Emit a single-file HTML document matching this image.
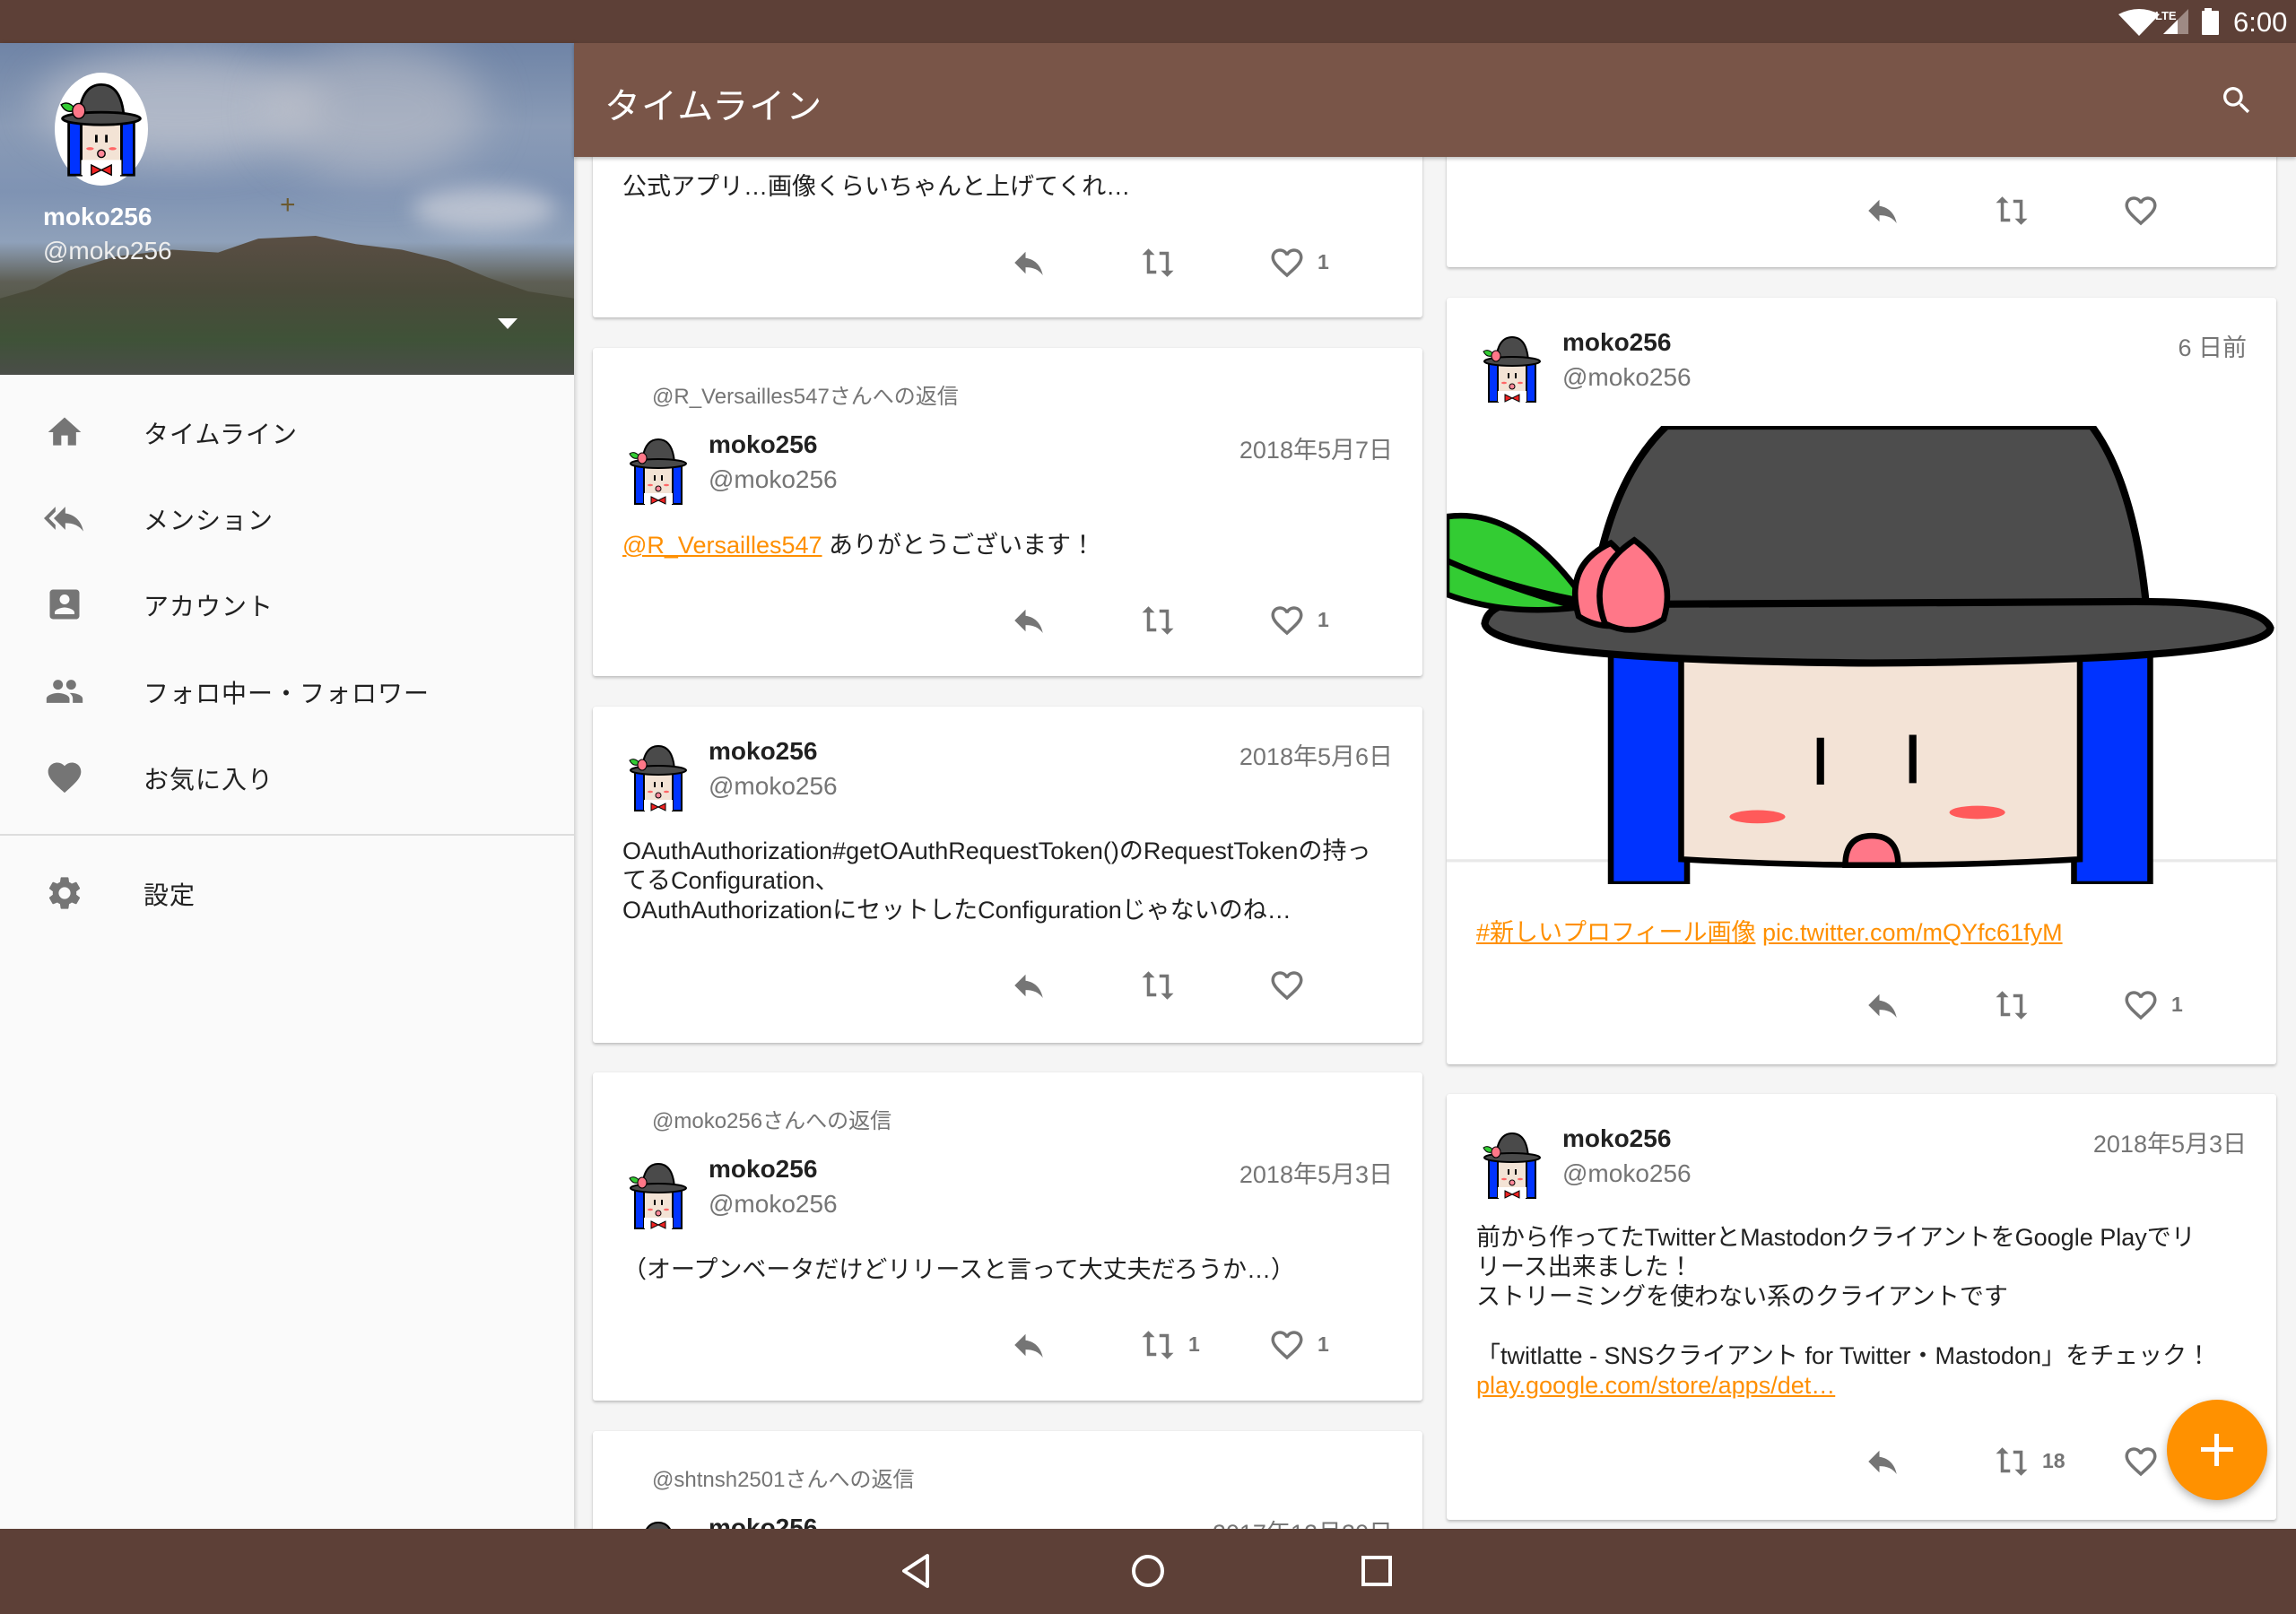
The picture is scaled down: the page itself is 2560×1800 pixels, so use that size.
<!DOCTYPE html>
<html><head><meta charset="utf-8"><style>
*{margin:0;padding:0;box-sizing:border-box}
body{width:2560px;height:1800px;overflow:hidden;background:#f5f5f5;font-family:"Liberation Sans","Noto Sans CJK JP",sans-serif;position:relative;color:#212121}
.abs{position:absolute}
.card{position:absolute;background:#fff;border-radius:3px;box-shadow:0 2px 3px rgba(0,0,0,.22),0 0 1px rgba(0,0,0,.12);overflow:hidden}
.t{position:absolute;white-space:nowrap}
.name{font-size:28px;font-weight:bold;color:#212121}
.handle{font-size:28px;color:#757575}
.date{font-size:27px;color:#757575}
.body{font-size:27px;color:#212121;line-height:33px}
.rep{font-size:24px;color:#757575}
.link{color:#ff8f00;text-decoration:underline}
.ic{position:absolute;width:42px;height:42px;fill:#757575}
.cnt{position:absolute;font-size:23px;color:#757575;font-weight:bold}
.menu{position:absolute;left:160px;font-size:28px;color:#212121;letter-spacing:1px;white-space:nowrap}
.mic{position:absolute;left:50px;width:44px;height:44px;fill:#757575}
</style></head><body>
<svg width="0" height="0" style="position:absolute">
<defs>
<symbol id="av" viewBox="0 0 80 80">
<rect x="14" y="34" width="10" height="44" fill="#0033ff" stroke="#000" stroke-width="2"/>
<rect x="56" y="34" width="10" height="44" fill="#0033ff" stroke="#000" stroke-width="2"/>
<rect x="24" y="34" width="32" height="34" fill="#f3e3d5" stroke="#000" stroke-width="2"/>
<path d="M22 32 Q24 6 40 6 Q56 6 58 32Z" fill="#4a4a4a" stroke="#000" stroke-width="2"/>
<ellipse cx="40" cy="33" rx="31" ry="5" fill="#4a4a4a" stroke="#000" stroke-width="2"/>
<path d="M8 22 Q14 18 20 26 Q12 30 8 22Z" fill="#3c3" stroke="#000" stroke-width="1"/>
<ellipse cx="22" cy="27" rx="5" ry="6" fill="#f78" stroke="#000" stroke-width="1"/>
<line x1="36" y1="46" x2="36" y2="52" stroke="#000" stroke-width="2"/><line x1="44" y1="46" x2="44" y2="52" stroke="#000" stroke-width="2"/>
<ellipse cx="31" cy="57" rx="3" ry="1.2" fill="#f66"/><ellipse cx="49" cy="57" rx="3" ry="1.2" fill="#f66"/>
<rect x="24" y="66" width="32" height="12" fill="#fff"/>
<path d="M32 70 L40 74 L48 70 L48 78 L40 74 L32 78Z" fill="#e22" stroke="#000" stroke-width="1"/>
<circle cx="40" cy="61" r="3" fill="#f89" stroke="#000" stroke-width="1"/>
</symbol>
<symbol id="reply" viewBox="0 0 24 24"><path d="M10 9V5l-7 7 7 7v-4.1c5 0 8.5 1.6 11 5.1-1-5-4-10-11-11z"/></symbol>
<symbol id="rt" viewBox="0 0 24 24"><path d="M7 7h10v3l4-4-4-4v3H5v6h2V7zm10 10H7v-3l-4 4 4 4v-3h12v-6h-2v4z" transform="rotate(90 12 12)"/></symbol>
<symbol id="fav" viewBox="0 0 24 24"><path d="M16.5 3c-1.74 0-3.41.81-4.5 2.09C10.91 3.81 9.24 3 7.5 3 4.420 3 2 5.42 2 8.5c0 3.78 3.4 6.86 8.55 11.54L12 21.35l1.45-1.32C18.6 15.36 22 12.280 22 8.5 22 5.42 19.58 3 16.5 3zm-4.4 15.55l-.1.1-.1-.1C7.14 14.24 4 11.39 4 8.5 4 6.5 5.5 5 7.5 5c1.54 0 3.04.99 3.57 2.36h1.87C13.46 5.99 14.96 5 16.5 5c2 0 3.5 1.5 3.5 3.5 0 2.89-3.14 5.74-7.9 10.05z"/></symbol>
</defs></svg>

<div class="abs" style="left:0;top:0;width:2560px;height:48px;background:#5d4037"></div>
<svg class="abs" style="left:2360px;top:10px" width="50" height="30" viewBox="0 0 50 30"><path d="M2 6 Q25 -6 48 6 L25 30Z" fill="#fff"/></svg>
<div class="t" style="left:2403px;top:10px;font-size:13px;color:#fff;font-weight:bold">LTE</div>
<svg class="abs" style="left:2410px;top:10px" width="32" height="30"><path d="M2 28 L30 0 L30 28Z" fill="#9e8a84"/><path d="M2 28 L18 12 L18 28Z" fill="#fff"/></svg>
<svg class="abs" style="left:2455px;top:9px" width="22" height="30"><rect x="3" y="0" width="8" height="4" fill="#fff"/><rect x="0" y="3" width="19" height="27" fill="#fff" rx="1"/></svg>
<div class="t" style="left:2490px;top:7px;font-size:31px;color:#fff">6:00</div>

<div class="abs" style="left:640px;top:48px;width:1920px;height:127px;background:#795548;box-shadow:0 2px 4px rgba(0,0,0,.25);z-index:2"></div>
<div class="t" style="left:674px;top:86px;font-size:40px;color:#fff;z-index:3;letter-spacing:1px">タイムライン</div>
<svg class="abs" style="left:2474px;top:92px;z-index:3" width="40" height="40" viewBox="0 0 24 24"><path fill="#fff" d="M15.5 14h-.79l-.28-.27A6.47 6.47 0 0 0 16 9.5 6.5 6.5 0 1 0 9.5 16c1.61 0 3.09-.59 4.23-1.57l.27.28v.79l5 4.99L20.49 19l-4.99-5zm-6 0C7.01 14 5 11.99 5 9.5S7.01 5 9.5 5 14 7.01 14 9.5 11.99 14 9.5 14z"/></svg>

<div class="abs" style="left:0;top:48px;width:640px;height:1657px;background:#fafafa;box-shadow:2px 0 4px rgba(0,0,0,.15);z-index:1"></div>
<div class="abs" style="left:0;top:48px;width:640px;height:370px;z-index:1;overflow:hidden;background:linear-gradient(180deg,#6f84a6 0%,#8a9bb6 25%,#7f93b3 45%,#8fa1ba 60%,#5e5f55 72%,#4f5340 85%,#3d4a3a 100%)">
 <div class="abs" style="left:40px;top:10px;width:320px;height:120px;border-radius:50%;background:rgba(210,210,215,.55);filter:blur(22px)"></div>
 <div class="abs" style="left:300px;top:0;width:240px;height:150px;border-radius:50%;background:rgba(200,200,205,.5);filter:blur(25px)"></div>
 <div class="abs" style="left:460px;top:160px;width:160px;height:50px;border-radius:50%;background:rgba(220,220,225,.6);filter:blur(12px)"></div>
 <div class="abs" style="left:0;top:215px;width:640px;height:155px;background:linear-gradient(180deg,#5a4e44,#4a4a3a 40%,#3f5238 75%,#4a4d48);clip-path:polygon(0 45%,6% 38%,12% 25%,20% 15%,30% 10%,38% 12%,45% 2%,55% 0%,62% 6%,70% 10%,78% 18%,85% 30%,92% 40%,100% 45%,100% 100%,0 100%)"></div>
</div>
<svg class="abs" style="left:49px;top:80px;z-index:2" width="128" height="128" viewBox="0 0 128 128"><ellipse cx="64" cy="64" rx="52" ry="63" fill="#fff"/><use href="#av" x="8" y="6" width="112" height="112"/></svg>
<div class="t" style="left:48px;top:226px;font-size:28px;font-weight:bold;color:#fff;z-index:2">moko256</div>
<div class="t" style="left:48px;top:264px;font-size:28px;color:#eee;z-index:2">@moko256</div>
<div class="t" style="left:312px;top:212px;font-size:30px;color:#6b5a30;z-index:2">+</div>
<svg class="abs" style="left:555px;top:355px;z-index:2" width="22" height="14"><path d="M0 0H22L11 12Z" fill="#fff"/></svg>

<div style="position:absolute;left:0;top:0;width:640px;height:1100px;z-index:2">
<svg class="mic" style="top:460px" viewBox="0 0 24 24"><path d="M10 20v-6h4v6h5v-8h3L12 3 2 12h3v8z"/></svg>
<div class="menu" style="top:463px">タイムライン</div>
<svg class="mic" style="top:556px;left:46px;width:50px" viewBox="0 0 24 24"><path d="M7 8V5l-7 7 7 7v-3l-4-4 4-4zm6 1V5l-7 7 7 7v-4.1c5 0 8.5 1.6 11 5.1-1-5-4-10-11-11z"/></svg>
<div class="menu" style="top:559px">メンション</div>
<svg class="mic" style="top:652px" viewBox="0 0 24 24"><path d="M3 5v14a2 2 0 0 0 2 2h14c1.1 0 2-.9 2-2V5c0-1.1-.9-2-2-2H5a2 2 0 0 0-2 2zm12 4c0 1.66-1.34 3-3 3s-3-1.34-3-3 1.34-3 3-3 3 1.34 3 3zm-9 8c0-2 4-3.1 6-3.1s6 1.1 6 3.1v1H6v-1z"/></svg>
<div class="menu" style="top:655px">アカウント</div>
<svg class="mic" style="top:749px" viewBox="0 0 24 24"><path d="M16 11c1.66 0 2.99-1.34 2.99-3S17.66 5 16 5c-1.66 0-3 1.34-3 3s1.34 3 3 3zm-8 0c1.66 0 2.99-1.34 2.99-3S9.66 5 8 5C6.34 5 5 6.34 5 8s1.34 3 3 3zm0 2c-2.33 0-7 1.17-7 3.5V19h14v-2.5c0-2.33-4.67-3.5-7-3.5zm8 0c-.29 0-.62.02-.97.05 1.16.84 1.97 1.97 1.97 3.45V19h6v-2.5c0-2.33-4.67-3.5-7-3.5z"/></svg>
<div class="menu" style="top:752px">フォロ中ー・フォロワー</div>
<svg class="mic" style="top:845px" viewBox="0 0 24 24"><path d="M12 21.35l-1.45-1.32C5.4 15.36 2 12.28 2 8.5 2 5.42 4.42 3 7.5 3c1.74 0 3.41.81 4.5 2.09C13.09 3.81 14.76 3 16.5 3 19.58 3 22 5.42 22 8.5c0 3.78-3.4 6.86-8.55 11.54L12 21.35z"/></svg>
<div class="menu" style="top:848px">お気に入り</div>
<div class="abs" style="left:0;top:930px;width:640px;height:2px;background:#ddd"></div>
<svg class="mic" style="top:974px" viewBox="0 0 24 24"><path d="M19.14 12.94c.04-.3.06-.61.06-.94 0-.32-.02-.64-.07-.94l2.030-1.58a.49.49 0 0 0 .12-.61l-1.92-3.32a.49.49 0 0 0-.59-.22l-2.39.96c-.5-.38-1.03-.7-1.62-.94l-.36-2.54a.48.48 0 0 0-.48-.41h-3.84c-.24 0-.43.17-.47.41l-.36 2.54c-.59.24-1.13.57-1.62.94l-2.39-.96a.49.49 0 0 0-.59.22L2.74 8.87c-.12.21-.08.47.12.61l2.03 1.58c-.05.3-.09.63-.09.94s.02.64.07.94l-2.03 1.58a.49.49 0 0 0-.12.61l1.92 3.32c.12.22.37.29.59.22l2.39-.96c.5.38 1.03.7 1.62.94l.36 2.54c.05.24.24.41.48.41h3.84c.24 0 .44-.17.47-.41l.36-2.54c.59-.24 1.13-.56 1.62-.94l2.39.96c.22.08.47 0 .59-.22l1.92-3.32c.12-.22.07-.47-.12-.61l-2.01-1.58zM12 15.6c-1.98 0-3.6-1.62-3.6-3.6s1.62-3.6 3.6-3.6 3.6 1.62 3.6 3.6-1.62 3.6-3.6 3.6z"/></svg>
<div class="menu" style="top:977px">設定</div>
</div>

<div class="card" style="left:661px;top:150px;width:925px;height:204px">
 <div class="t body" style="left:33px;top:42px">公式アプリ…画像くらいちゃんと上げてくれ…</div>
 <svg class="ic" style="left:465px;top:122px"><use href="#reply"/></svg>
 <svg class="ic" style="left:609px;top:122px"><use href="#rt"/></svg>
 <svg class="ic" style="left:753px;top:122px"><use href="#fav"/></svg>
 <div class="cnt" style="left:808px;top:129px">1</div>
</div>

<div class="card" style="left:661px;top:388px;width:925px;height:366px">
 <div class="t rep" style="left:66px;top:34px">@R_Versailles547さんへの返信</div>
 <svg class="abs" style="left:33px;top:96px" width="80" height="80"><use href="#av"/></svg>
 <div class="t name" style="left:129px;top:92px">moko256</div>
 <div class="t handle" style="left:129px;top:131px">@moko256</div>
 <div class="t date" style="right:33px;top:92px">2018年5月7日</div>
 <div class="t body" style="left:33px;top:204px"><span class="link">@R_Versailles547</span> ありがとうございます！</div>
 <svg class="ic" style="left:465px;top:283px"><use href="#reply"/></svg>
 <svg class="ic" style="left:609px;top:283px"><use href="#rt"/></svg>
 <svg class="ic" style="left:753px;top:283px"><use href="#fav"/></svg>
 <div class="cnt" style="left:808px;top:290px">1</div>
</div>

<div class="card" style="left:661px;top:788px;width:925px;height:375px">
 <svg class="abs" style="left:33px;top:38px" width="80" height="80"><use href="#av"/></svg>
 <div class="t name" style="left:129px;top:34px">moko256</div>
 <div class="t handle" style="left:129px;top:73px">@moko256</div>
 <div class="t date" style="right:33px;top:34px">2018年5月6日</div>
 <div class="t body" style="left:33px;top:145px">OAuthAuthorization#getOAuthRequestToken()のRequestTokenの持っ<br>てるConfiguration、<br>OAuthAuthorizationにセットしたConfigurationじゃないのね…</div>
 <svg class="ic" style="left:465px;top:290px"><use href="#reply"/></svg>
 <svg class="ic" style="left:609px;top:290px"><use href="#rt"/></svg>
 <svg class="ic" style="left:753px;top:290px"><use href="#fav"/></svg>
</div>

<div class="card" style="left:661px;top:1196px;width:925px;height:366px">
 <div class="t rep" style="left:66px;top:34px">@moko256さんへの返信</div>
 <svg class="abs" style="left:33px;top:96px" width="80" height="80"><use href="#av"/></svg>
 <div class="t name" style="left:129px;top:92px">moko256</div>
 <div class="t handle" style="left:129px;top:131px">@moko256</div>
 <div class="t date" style="right:33px;top:92px">2018年5月3日</div>
 <div class="t body" style="left:33px;top:204px">（オープンベータだけどリリースと言って大丈夫だろうか…）</div>
 <svg class="ic" style="left:465px;top:283px"><use href="#reply"/></svg>
 <svg class="ic" style="left:609px;top:283px"><use href="#rt"/></svg>
 <div class="cnt" style="left:664px;top:290px">1</div>
 <svg class="ic" style="left:753px;top:283px"><use href="#fav"/></svg>
 <div class="cnt" style="left:808px;top:290px">1</div>
</div>

<div class="card" style="left:661px;top:1596px;width:925px;height:200px">
 <div class="t rep" style="left:66px;top:34px">@shtnsh2501さんへの返信</div>
 <svg class="abs" style="left:33px;top:96px" width="80" height="80"><use href="#av"/></svg>
 <div class="t name" style="left:129px;top:92px">moko256</div>
 <div class="t date" style="right:33px;top:92px">2017年12月30日</div>
</div>

<div class="card" style="left:1613px;top:150px;width:925px;height:148px">
 <svg class="ic" style="left:465px;top:64px"><use href="#reply"/></svg>
 <svg class="ic" style="left:609px;top:64px"><use href="#rt"/></svg>
 <svg class="ic" style="left:753px;top:64px"><use href="#fav"/></svg>
</div>

<div class="card" style="left:1613px;top:332px;width:925px;height:855px">
 <svg class="abs" style="left:33px;top:38px" width="80" height="80"><use href="#av"/></svg>
 <div class="t name" style="left:129px;top:34px">moko256</div>
 <div class="t handle" style="left:129px;top:73px">@moko256</div>
 <div class="t date" style="right:33px;top:34px">6 日前</div>
 <svg class="abs" style="left:0;top:143px" width="925" height="511" viewBox="0 0 566 313" preserveAspectRatio="none">
  <rect width="566" height="313" fill="#fff"/>
  <rect x="0" y="296" width="566" height="2" fill="#e8e8e8"/>
  <rect x="112" y="150" width="52" height="163" fill="#0033ff" stroke="#000" stroke-width="4"/>
  <rect x="428" y="150" width="52" height="163" fill="#0033ff" stroke="#000" stroke-width="4"/>
  <path d="M160 140 H432 V296 Q296 304 160 296Z" fill="#f3e3d6" stroke="#000" stroke-width="4"/>
  <line x1="255" y1="213" x2="255" y2="245" stroke="#000" stroke-width="5"/>
  <line x1="318" y1="211" x2="318" y2="244" stroke="#000" stroke-width="5"/>
  <ellipse cx="212" cy="267" rx="19" ry="4.5" fill="#ff5a5a"/>
  <ellipse cx="362" cy="264" rx="19" ry="4.5" fill="#ff5a5a"/>
  <path d="M272 300 Q272 280 290 280 Q308 280 308 300Z" fill="#f78" stroke="#000" stroke-width="4"/>
  <path d="M98 130 Q108 40 150 0 H440 Q470 40 478 130Z" fill="#4d4d4d" stroke="#000" stroke-width="5"/>
  <path d="M26 135 Q30 112 100 122 L470 120 Q555 120 562 138 Q560 160 290 162 Q30 160 26 135Z" fill="#4d4d4d" stroke="#000" stroke-width="5"/>
  <path d="M0 62 Q50 55 95 120 Q40 110 0 92Z" fill="#3c3" stroke="#000" stroke-width="4"/>
  <path d="M0 92 Q40 110 90 124 Q40 130 0 115Z" fill="#3c3" stroke="#000" stroke-width="4"/>
  <path d="M90 130 Q80 95 112 80 Q135 100 125 135 Q105 140 90 130Z" fill="#f78" stroke="#000" stroke-width="4"/>
  <path d="M108 135 Q95 100 128 78 Q158 100 148 132 Q128 145 108 135Z" fill="#f78" stroke="#000" stroke-width="4"/>
 </svg>
 <div class="t body" style="left:33px;top:692px"><span class="link">#新しいプロフィール画像</span> <span class="link">pic.twitter.com/mQYfc61fyM</span></div>
 <svg class="ic" style="left:465px;top:768px"><use href="#reply"/></svg>
 <svg class="ic" style="left:609px;top:768px"><use href="#rt"/></svg>
 <svg class="ic" style="left:753px;top:768px"><use href="#fav"/></svg>
 <div class="cnt" style="left:808px;top:775px">1</div>
</div>

<div class="card" style="left:1613px;top:1220px;width:925px;height:475px">
 <svg class="abs" style="left:33px;top:38px" width="80" height="80"><use href="#av"/></svg>
 <div class="t name" style="left:129px;top:34px">moko256</div>
 <div class="t handle" style="left:129px;top:73px">@moko256</div>
 <div class="t date" style="right:33px;top:34px">2018年5月3日</div>
 <div class="t body" style="left:33px;top:144px">前から作ってたTwitterとMastodonクライアントをGoogle Playでリ<br>リース出来ました！<br>ストリーミングを使わない系のクライアントです<br><br>「twitlatte - SNSクライアント for Twitter・Mastodon」をチェック！<br><span class="link">play.google.com/store/apps/det…</span></div>
 <svg class="ic" style="left:465px;top:389px"><use href="#reply"/></svg>
 <svg class="ic" style="left:609px;top:389px"><use href="#rt"/></svg>
 <div class="cnt" style="left:664px;top:396px">18</div>
 <svg class="ic" style="left:753px;top:389px"><use href="#fav"/></svg>
</div>

<div class="abs" style="left:2416px;top:1561px;width:112px;height:112px;border-radius:50%;background:#ff9100;box-shadow:0 4px 10px rgba(0,0,0,.3);z-index:3"></div>
<div class="abs" style="left:2469px;top:1599px;width:5px;height:36px;background:#fff;z-index:4"></div>
<div class="abs" style="left:2454px;top:1614px;width:36px;height:5px;background:#fff;z-index:4"></div>

<div class="abs" style="left:0;top:1705px;width:2560px;height:95px;background:#5d4037;z-index:5"></div>
<svg class="abs" style="left:1000px;top:1727px;z-index:6" width="50" height="50"><path d="M34 8 L34 42 L8 25Z" fill="none" stroke="#fff" stroke-width="4" stroke-linejoin="round"/></svg>
<svg class="abs" style="left:1255px;top:1727px;z-index:6" width="50" height="50"><circle cx="25" cy="25" r="16" fill="none" stroke="#fff" stroke-width="4"/></svg>
<svg class="abs" style="left:1510px;top:1727px;z-index:6" width="50" height="50"><rect x="10" y="10" width="30" height="30" fill="none" stroke="#fff" stroke-width="4"/></svg>
</body></html>
